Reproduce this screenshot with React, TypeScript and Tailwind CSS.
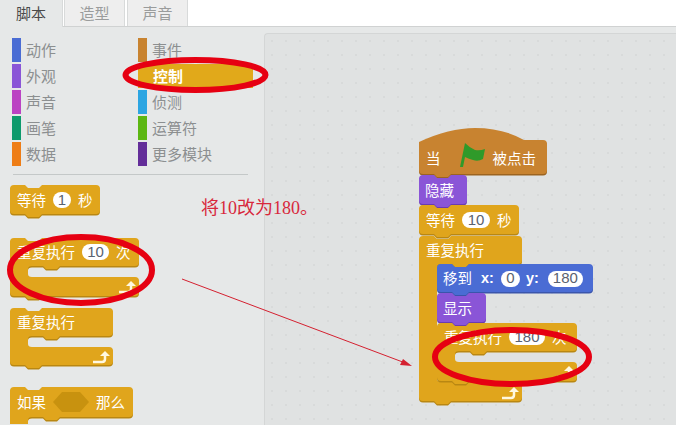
import type { ReactNode } from 'react'

const CONTROL = '#e0a51c'
const CONTROL_DARK = '#b98712'
const SANS = 'font-["Noto_Sans_CJK_SC","Liberation_Sans",sans-serif]'

const leftCategories = [
  { label: '动作', color: 'bg-[#4a6cd4]' },
  { label: '外观', color: 'bg-[#8a55d7]' },
  { label: '声音', color: 'bg-[#bb42c3]' },
  { label: '画笔', color: 'bg-[#0e9a6c]' },
  { label: '数据', color: 'bg-[#ee7d16]' },
]

const rightCategories = [
  { label: '事件', color: 'bg-[#c88330]' },
  { label: '控制', color: 'bg-[#e1a91a]', active: true },
  { label: '侦测', color: 'bg-[#2ca5e2]' },
  { label: '运算符', color: 'bg-[#5cb712]' },
  { label: '更多模块', color: 'bg-[#632d99]' },
]

// top edge with the notch, going left to right
function topEdge(w: number) {
  return `M0 4 Q0 0 4 0 H15 L18 3 H29 L32 0 H${w - 4} Q${w} 0 ${w} 4`
}

// right side down to the bottom, then the tab, back to the left edge
function bottomEdge(w: number, h: number) {
  return `V${h - 4} Q${w} ${h} ${w - 4} ${h} H32 L29 ${h + 3} H18 L15 ${h} H4 Q0 ${h} 0 ${h - 4} Z`
}

function stackPath(w: number, h: number) {
  return `${topEdge(w)} ${bottomEdge(w, h)}`
}

function hatPath(w: number, h: number) {
  return `M0 14 Q30 0 56 0 Q84 0 105 12 H${w - 4} Q${w} 12 ${w} 16 ${bottomEdge(w, h)}`
}

function loopPath(w: number, h: number, arm: number, mouth: number) {
  const by = arm + mouth
  return `${topEdge(w)} V${arm - 4} Q${w} ${arm} ${w - 4} ${arm} H50 L47 ${arm + 3} H36 L33 ${arm} H22 Q18 ${arm} 18 ${arm + 3} V${by - 3} Q18 ${by} 22 ${by} H${w - 4} Q${w} ${by} ${w} ${by + 4} ${bottomEdge(w, h)}`
}

function BlockShape({ d, w, h, fill, dark }: { d: string; w: number; h: number; fill: string; dark: string }) {
  return (
    <svg className="absolute left-0 top-0 overflow-visible" width={w} height={h} viewBox={`0 0 ${w} ${h}`}>
      <path d={d} fill={dark} transform="translate(0 1.5)" />
      <path d={d} fill={fill} />
    </svg>
  )
}

function Pill({ children, className = '' }: { children: ReactNode; className?: string }) {
  return (
    <span className={`relative flex h-[16px] items-center justify-center rounded-full bg-white font-["Liberation_Sans",sans-serif] text-[15px] font-normal text-[#5a6270] ${className}`}>
      {children}
    </span>
  )
}

function Label({ children, className = '' }: { children: ReactNode; className?: string }) {
  return <span className={`relative leading-none ${className}`}>{children}</span>
}

function LoopArrow({ className }: { className: string }) {
  return (
    <svg className={`absolute ${className}`} width="19" height="15" viewBox="0 0 19 15">
      <path d="M1 13 H10 Q13 13 13 10 V7" fill="none" stroke="#fff8e0" strokeWidth="2.5" />
      <path d="M8 7 L13 2 L18 7 Z" fill="#fff8e0" />
    </svg>
  )
}

function WaitBlock({ value, pill, width }: { value: string; pill: string; width: number }) {
  return (
    <div className={`relative flex h-[30px] items-center gap-[7px] pl-[7px] text-[14.5px] text-white ${width === 90 ? 'w-[90px]' : 'w-[100px]'}`}>
      <BlockShape d={stackPath(width, 29)} w={width} h={29} fill={CONTROL} dark={CONTROL_DARK} />
      <Label>等待</Label>
      <Pill className={pill}>{value}</Pill>
      <Label>秒</Label>
    </div>
  )
}

function RepeatForever() {
  return (
    <div className="relative h-[59px] w-[103px] pl-[7px] text-[14.5px] text-white">
      <BlockShape d={loopPath(103, 57, 28, 11)} w={103} h={57} fill={CONTROL} dark={CONTROL_DARK} />
      <div className="relative flex h-[28px] items-center">
        <Label>重复执行</Label>
      </div>
      <LoopArrow className="right-[2px] bottom-[3px]" />
    </div>
  )
}

function RepeatBlock({ value, width, pill }: { value: string; width: number; pill: string }) {
  return (
    <div className={`relative h-[60px] pl-[7px] text-[14.5px] text-white ${width === 129 ? 'w-[129px]' : 'w-[140px]'}`}>
      <BlockShape d={loopPath(width, 58, 28, 11)} w={width} h={58} fill={CONTROL} dark={CONTROL_DARK} />
      <div className="relative flex h-[28px] items-center gap-[7px]">
        <Label>重复执行</Label>
        <Pill className={pill}>{value}</Pill>
        <Label>次</Label>
      </div>
      <LoopArrow className="right-[2px] bottom-[4px]" />
    </div>
  )
}

function IfBlock() {
  return (
    <div className="relative h-[37px] w-[123px] overflow-hidden pl-[7px] text-[14.5px] text-white">
      <BlockShape d={loopPath(123, 60, 30, 14)} w={123} h={60} fill={CONTROL} dark={CONTROL_DARK} />
      <div className="relative flex h-[30px] items-center gap-[7px]">
        <Label>如果</Label>
        <svg width="36" height="20" viewBox="0 0 36 20">
          <path d="M9 0 H27 L36 10 L27 20 H9 L0 10 Z" fill="#c8920f" />
        </svg>
        <Label>那么</Label>
      </div>
    </div>
  )
}

function CategoryColumn({ items, className }: { items: { label: string; color: string; active?: boolean }[]; className: string }) {
  return (
    <ul className={`flex flex-col gap-[2px] ${className}`}>
      {items.map((item) => (
        <li
          key={item.label}
          className={`flex h-[24px] items-center text-[15px] ${item.active ? `w-[115px] font-bold text-white ${item.color}` : 'text-[#8c8f90]'}`}
        >
          <span className={`mr-[5px] h-[24px] w-[9px] ${item.color}`} />
          {item.active ? <span className="ml-[1px]">{item.label}</span> : item.label}
        </li>
      ))}
    </ul>
  )
}

function Palette() {
  return (
    <aside className="flex h-full w-[264px] shrink-0 flex-col pt-[11px]">
      <div className="flex">
        <CategoryColumn items={leftCategories} className="ml-[12px] w-[126px]" />
        <CategoryColumn items={rightCategories} className="" />
      </div>
      <div className="ml-[13px] mt-[8px] h-px w-[235px] bg-[#c4c8c8]" />
      <div className="ml-[10px] mt-[10px] flex flex-col items-start">
        <WaitBlock value="1" width={90} pill="w-[18px]" />
        <div className="mt-[23px]">
          <RepeatBlock value="10" width={129} pill="w-[27px]" />
        </div>
        <div className="mt-[10px]">
          <RepeatForever />
        </div>
        <div className="mt-[20px]">
          <IfBlock />
        </div>
      </div>
    </aside>
  )
}

function Script() {
  return (
    <div className="absolute left-[154px] top-[94px] flex w-[180px] flex-col items-start">
      <div className="relative flex h-[47px] w-[128px] items-center pl-[7px] pt-[13px] text-[14.5px] text-white">
        <BlockShape d={hatPath(128, 46)} w={128} h={46} fill="#c88330" dark="#9c6420" />
        <Label>当</Label>
        <svg className="relative ml-[19px] mr-[7px] -mt-[6px]" width="26" height="26" viewBox="0 0 26 26">
          <path d="M5 1 Q10 6 15 8 Q20 9 25 7 L23 17 Q18 20 13 18 Q9 17 5 15 L3 25 H0 Z" fill="#2f9a2a" />
        </svg>
        <Label>被点击</Label>
      </div>
      <div className="relative flex h-[30px] w-[48px] items-center pl-[6px] text-[14.5px] text-white">
        <BlockShape d={stackPath(48, 29)} w={48} h={29} fill="#8a55d7" dark="#6a3cb0" />
        <Label>隐藏</Label>
      </div>
      <WaitBlock value="10" width={100} pill="w-[28px]" />
      <div className="relative mt-[1px] h-[167px] w-[103px]">
        <BlockShape d={loopPath(103, 165, 28, 118)} w={103} h={165} fill={CONTROL} dark={CONTROL_DARK} />
        <div className="relative flex h-[28px] items-center pl-[7px] text-[14.5px] text-white">
          <Label>重复执行</Label>
        </div>
        <LoopArrow className="right-[2px] bottom-[3px]" />
        <div className="absolute left-[18px] top-[28px] flex w-[160px] flex-col items-start">
          <div className="relative flex h-[29px] w-[156px] items-center pl-[6px] text-[14.5px] font-bold text-white">
            <BlockShape d={stackPath(156, 28)} w={156} h={28} fill="#4a6cd4" dark="#3a55ab" />
            <Label className="font-normal">移到</Label>
            <Label className='ml-[9px] font-["Liberation_Sans",sans-serif]'>x:</Label>
            <Pill className="ml-[7px] w-[19px]">0</Pill>
            <Label className='ml-[6px] font-["Liberation_Sans",sans-serif]'>y:</Label>
            <Pill className="ml-[9px] w-[35px]">180</Pill>
          </div>
          <div className="relative flex h-[30px] w-[49px] items-center pl-[6px] text-[14.5px] text-white">
            <BlockShape d={stackPath(49, 29)} w={49} h={29} fill="#8a55d7" dark="#6a3cb0" />
            <Label>显示</Label>
          </div>
          <RepeatBlock value="180" width={140} pill="w-[36px]" />
        </div>
      </div>
    </div>
  )
}

export default function App() {
  return (
    <div className={`relative flex h-[425px] w-[676px] flex-col overflow-hidden bg-white ${SANS}`}>
      <nav className="flex h-[27px] shrink-0 items-end border-b border-[#d0d2d2] text-[15px]">
        <div className="relative z-10 -mb-px flex h-[27px] w-[63px] items-center justify-center border-r border-[#d8dada] bg-[#e6e8e8] text-[#4a4a4a]">脚本</div>
        <div className="ml-[1px] flex h-[26px] w-[61px] items-center justify-center border-x border-[#d8dada] bg-[#eeeeee] text-[#9a9c9c]">造型</div>
        <div className="ml-[2px] flex h-[26px] w-[61px] items-center justify-center border-x border-[#d8dada] bg-[#eeeeee] text-[#9a9c9c]">声音</div>
      </nav>
      <div className="flex min-h-0 flex-1 bg-[#e6e8e8]">
        <Palette />
        <main className="relative mt-[6px] flex-1 rounded-tl-[4px] border-l border-t border-[#d4d6d6] bg-[#e0e2e2] bg-[radial-gradient(#d8dada_1px,transparent_1px)] bg-[size:14px_14px]">
          <Script />
        </main>
      </div>

      {/* hand drawn marks on top of the screenshot */}
      <svg className="pointer-events-none absolute left-0 top-0" width="676" height="425" viewBox="0 0 676 425">
        <ellipse cx="195.5" cy="75" rx="70" ry="15" fill="none" stroke="#e60012" strokeWidth="6" />
        <ellipse cx="81" cy="270" rx="71" ry="33" fill="none" stroke="#e60012" strokeWidth="6" />
        <ellipse cx="512" cy="357" rx="77" ry="27" fill="none" stroke="#e60012" strokeWidth="6" />
        <path d="M182 279 L408 364" stroke="#d42030" strokeWidth="1" />
        <path d="M412 366 L400 365 L403 359 Z" fill="#d42030" />
      </svg>
      <p className='absolute left-[201px] top-[197px] font-["Liberation_Serif","Noto_Sans_CJK_SC",serif] text-[18px] leading-[22px] text-[#d8283c]'>
        将10改为180。
      </p>
    </div>
  )
}
